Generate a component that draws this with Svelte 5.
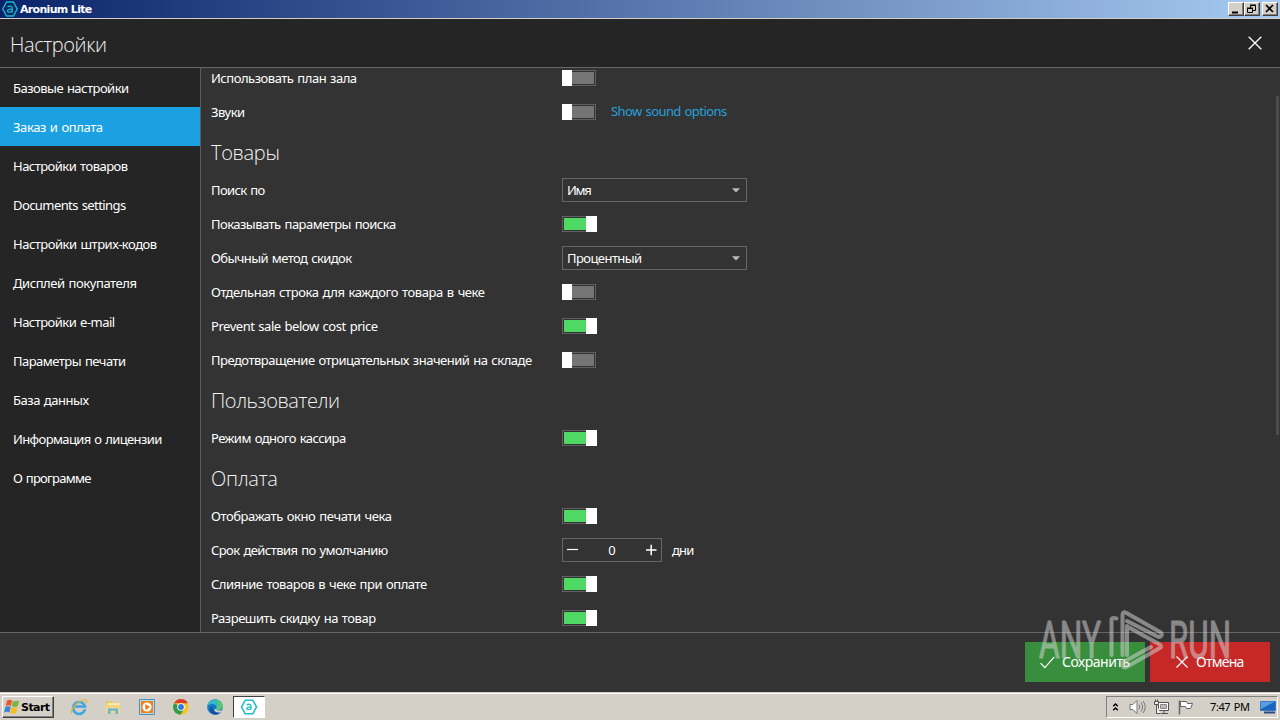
<script>
  const nav = [
    ['Базовые настройки', 116], ['Заказ и оплата', 90], ['Настройки товаров', 115],
    ['Documents settings', 113], ['Настройки штрих-кодов', 144], ['Дисплей покупателя', 124],
    ['Настройки e-mail', 102], ['Параметры печати', 113], ['База данных', 76],
    ['Информация о лицензии', 149], ['О программе', 78]
  ];
  const rows = [
    { label: 'Использовать план зала', w: 146, type: 'toggle', on: false },
    { label: 'Звуки', w: 34, type: 'toggle', on: false, link: 'Show sound options' },
    { heading: 'Товары', w: 69 },
    { label: 'Поиск по', w: 54, type: 'select', value: 'Имя', vw: 24 },
    { label: 'Показывать параметры поиска', w: 185, type: 'toggle', on: true },
    { label: 'Обычный метод скидок', w: 141, type: 'select', value: 'Процентный', vw: 75 },
    { label: 'Отдельная строка для каждого товара в чеке', w: 274, type: 'toggle', on: false },
    { label: 'Prevent sale below cost price', w: 167, type: 'toggle', on: true },
    { label: 'Предотвращение отрицательных значений на складе', w: 321, type: 'toggle', on: false },
    { heading: 'Пользователи', w: 129 },
    { label: 'Режим одного кассира', w: 135, type: 'toggle', on: true },
    { heading: 'Оплата', w: 67 },
    { label: 'Отображать окно печати чека', w: 181, type: 'toggle', on: true },
    { label: 'Срок действия по умолчанию', w: 177, type: 'number', value: 0 },
    { label: 'Слияние товаров в чеке при оплате', w: 216, type: 'toggle', on: true },
    { label: 'Разрешить скидку на товар', w: 165, type: 'toggle', on: true }
  ];

  // Spreads the letters so that a label takes the given width.
  function fit(node, width) {
    const natural = node.getBoundingClientRect().width;
    const spacing = (width - 0.4 - natural) / node.textContent.length;
    node.style.letterSpacing = `${spacing}px`;
  }
</script>

<div class="screen">
  <div class="titlebar">
    <svg class="logo" width="16" height="16" viewBox="0 0 16 16">
      <path d="M4.600 1h6.800L15.200 8l-3.800 7H4.600L.8 8z" fill="#0b2a5c" stroke="#19b5d8" stroke-width="1.400" />
      <path d="M5.700 6.200c.8-1.500 4.500-1.500 4.500.8v4.500M10.200 8.100c-1.600-.1-4.700 0-4.700 1.700 0 2 3.900 1.800 4.700-.3" fill="none" stroke="#19b5d8" stroke-width="1.300" />
    </svg>
    <b use:fit={72}>Aronium Lite</b>
    <div class="winbtns">
      <i><svg width="14" height="12"><path d="M3 9.500h6" stroke="#000" stroke-width="2" /></svg></i>
      <i><svg width="14" height="12" fill="none" stroke="#000"><path d="M5.500 5V2.500h5v5H8M5 2h6" /><path d="M2.500 5.500h5v4h-5zM2 5h6" /></svg></i>
      <i class="gap"><svg width="14" height="12"><path d="M3 2l7 7M10 2L3 9" stroke="#000" stroke-width="1.700" /></svg></i>
    </div>
  </div>

  <header>
    <h1 use:fit={97}>Настройки</h1>
    <svg width="14" height="14" viewBox="0 0 14 14"><path d="M.7.7l12.600 12.600M13.300.7L.7 13.300" stroke="#fff" stroke-width="1.300" /></svg>
  </header>

  <div class="body">
    <nav>
      {#each nav as [label, w], i}
        <div class="item" class:active={i === 1}><span use:fit={w}>{label}</span></div>
      {/each}
    </nav>
    <main>
      <div class="list">
        {#each rows as row}
          {#if row.heading}
            <h2><span use:fit={row.w}>{row.heading}</span></h2>
          {:else}
            <div class="row">
              <div class="label"><span use:fit={row.w}>{row.label}</span></div>
              {#if row.type === 'toggle'}
                <div class="toggle" class:on={row.on}><div class="fill"></div><div class="knob"></div></div>
                {#if row.link}<span class="link"><span use:fit={116}>{row.link}</span></span>{/if}
              {:else if row.type === 'select'}
                <div class="select"><span use:fit={row.vw}>{row.value}</span>
                  <svg width="8" height="5"><path d="M0 .3h8L4 4.600z" fill="#bbb" /></svg>
                </div>
              {:else}
                <div class="number">
                  <svg width="12" height="12"><path d="M0 5.500h11" stroke="#fff" stroke-width="1.200" /></svg>
                  <span>{row.value}</span>
                  <svg width="12" height="12"><path d="M1 6h10.500M6.200 .8v10.400" stroke="#fff" stroke-width="1.500" /></svg>
                </div>
                <span class="unit"><span use:fit={22}>дни</span></span>
              {/if}
            </div>
          {/if}
        {/each}
      </div>
      <div class="scroll"></div>
    </main>
  </div>

  <footer>
    <div class="btn save">
      <svg width="15" height="13" viewBox="0 0 15 13"><path d="M.6 7.200l4.200 4.500L14.300.8" fill="none" stroke="#fff" stroke-width="1.200" /></svg>
      <span use:fit={68}>Сохранить</span>
    </div>
    <div class="btn cancel">
      <svg width="12" height="12" viewBox="0 0 12 12"><path d="M.5.5l11 11M11.500.5l-11 11" stroke="#fff" stroke-width="1.200" /></svg>
      <span use:fit={48}>Отмена</span>
    </div>
  </footer>

  <div class="taskbar">
    <div class="start">
      <svg width="16" height="16" viewBox="0 0 16 16">
        <path d="M3 1.500Q5.500 0 8 1.500L6.900 7Q4.500 5.700 1.700 7z" fill="#e8582c" />
        <path d="M8.700 1.800Q11.500 3 15.300 1.600L13.800 7.300Q10.500 8.600 7.700 7.300z" fill="#7cb342" />
        <path d="M1.500 7.800Q4.200 6.500 6.700 7.900L5.500 13.500Q3 12.200.1 13.500z" fill="#3b83d8" />
        <path d="M7.500 8.200Q10.300 9.500 13.600 8.200L12.200 14Q9 15.200 6.100 13.900z" fill="#f6bd22" />
      </svg>
      <b use:fit={29}>Start</b>
    </div>
    <div class="apps">
      <svg viewBox="0 0 18 18">
        <path d="M15 11.300A6 6 0 1 1 15 8.600H5" fill="none" stroke="#3fa5e2" stroke-width="2.500" />
        <path d="M2 15.800C-1 14 5 5.500 10.500 3S18 2 16 5.500" fill="none" stroke="#e9b72f" stroke-width="1.200" />
      </svg>
      <svg viewBox="0 0 18 18">
        <path d="M2 3h5l1 1.500h7V14H2z" fill="#e8c765" /><path d="M3.500 5h12v4h-12z" fill="#f8eaab" />
        <path d="M2 7h14v8H2z" fill="#f0d67e" /><path d="M4 16v-5.500h10V16h-2.500v-3.200h-5V16z" fill="#62b6dd" />
      </svg>
      <svg viewBox="0 0 18 18">
        <path d="M1.500 1.500h15v15h-15z" fill="#b9d8ee" stroke="#4c93c5" /><path d="M3 3h12v12H3z" fill="#ef8315" />
        <circle cx="9" cy="9" r="4.600" fill="#fff" /><path d="M7.400 6l4.600 3-4.600 3z" fill="#ed7410" />
      </svg>
      <svg viewBox="0 0 18 18">
        <circle cx="9" cy="9" r="7.800" fill="#f6c51f" />
        <path d="M2.200 5A7.800 7.800 0 0 0 8.500 16.800L12 11 9 9z" fill="#2d9d4a" />
        <path d="M2.200 5A7.800 7.800 0 0 1 15.800 5.200H9z" fill="#dc3b2e" />
        <circle cx="9" cy="9" r="3.800" fill="#fff" /><circle cx="9" cy="9" r="2.900" fill="#3478dd" />
      </svg>
      <svg viewBox="0 0 18 18">
        <circle cx="9" cy="9" r="7.800" fill="#1676c4" />
        <path d="M1.300 8C2.500-.8 15.500-.8 16.800 8c.2 3.800-5.300 4.700-6.800 2.900 1.500-2.500-.3-4.900-3.700-4.900C4 6 2.200 6.800 1.300 8z" fill="#36b8c8" />
        <path d="M10.500 1.400C14 2 16.500 5 16.800 8c.2 3.800-5.300 4.700-6.800 2.900C13 8 12 4 10.500 1.400z" fill="#5cc76a" />
        <path d="M6.500 8.500C5.500 13 10 16 14.900 14.200 12.500 17 8.500 17.200 6 15.500 2.800 13 4 9.500 6.500 8.500z" fill="#124f9d" />
        <path d="M10 10.900c1.200 2 4.500 2.200 6.300.8-.4 1-1 1.900-1.600 2.500-3 1-6.200-.2-6.400-2.900z" fill="#d4d0c8" />
      </svg>
    </div>
    <div class="task">
      <svg width="18" height="16" viewBox="0 0 18 16">
        <path d="M5.200 1.200h7.600L16.500 8l-3.700 6.800H5.200L1.500 8z" fill="none" stroke="#20bfc6" stroke-width="1.600" />
        <path d="M6.800 6.100c.8-1.200 4.200-1.300 4.200.8v3.900M11 8.100c-1.500-.1-4.300 0-4.300 1.400 0 1.700 3.500 1.500 4.300-.2" fill="none" stroke="#20bfc6" stroke-width="1.300" />
      </svg>
    </div>
    <div class="tray">
      <svg class="chev" width="8" height="10" fill="none" stroke="#000" stroke-width="1.400"><path d="M1.200 4.300L3.500 2l2.300 2.300M1.200 8.300l2.300-2.300 2.300 2.300" /></svg>
      <svg width="18" height="16" fill="none" stroke="#777">
        <path d="M1 5.500h3l4-4v13l-4-4H1z" fill="#fff" /><path d="M10 5.500q1.800 2.500 0 5M12 3.500q3.200 4.500 0 9M14 2q4.500 6 0 12" />
      </svg>
      <svg class="net" width="18" height="16" fill="none" stroke="#555">
        <path d="M5.500 3.500h10v8h-10z" fill="#fff" /><path d="M7.500 5.500h6v4h-6z" fill="#bbb" stroke="#888" /><path d="M8 14.500h7M11 12v2" />
        <path d="M1.500 2.500h4v3h-4zM2.500 .5v2M4.500 .5v2M3.500 5.500v9h4" fill="#eee" />
      </svg>
      <svg class="flag" width="17" height="16" stroke="#666"><path d="M2.500 1.500v14" stroke-width="1.500" /><path d="M3.500 2.500h6l1 2h5l-2 5h-4l-1-2h-5z" fill="#fff" /></svg>
      <span class="clock"><span use:fit={40}>7:47 PM</span></span>
      <svg class="desk" width="16" height="16"><path d="M.5 2.500h15v9H.5z" fill="#1c63bd" stroke="#3979c8" /><path d="M1 3h13L1 10z" fill="#5a9de5" /><path d="M4 13.500h11" stroke="#294c82" stroke-width="2" /></svg>
    </div>
  </div>

  <svg class="watermark" width="200" height="74" viewBox="0 0 200 74" fill="none" stroke-linejoin="round" stroke-linecap="round">
    <text x="1" y="54" textLength="62" lengthAdjust="spacingAndGlyphs">ANY</text>
    <path d="M73.500 51V16q0-3 5-1.500" />
    <path d="M84.500 51V11q0-4 4-2L122 28q3.500 2.500.5 4.500-2 1-4-.5L89 17" />
    <path d="M89 51V22M90 23l31 17q4 2.500 0 4.500L88.500 63q-4 1.500-4-3v-1.500L113 43" />
    <text x="131" y="54" textLength="62" lengthAdjust="spacingAndGlyphs">RUN</text>
  </svg>
</div>

<style>
  :global(body) { margin: 0; overflow: hidden; }
  .screen { position: relative; width: 1280px; height: 720px; display: flex; flex-direction: column; background: #333; color: #fff; font: 13px/16px "Noto Sans", "Open Sans", sans-serif; word-spacing: 1px; overflow: hidden; white-space: nowrap; }
  .screen * { box-sizing: border-box; }
  svg { display: block; flex: none; }
  span, b { display: inline-block; }
  .titlebar { height: 19px; flex: none; display: flex; align-items: center; padding: 0 2px; background: linear-gradient(90deg, #0a246a, #a6caf0); border-bottom: 1px solid #d4d0c8; }
  .logo { margin-right: 2px; }
  .titlebar b { font: bold 11px/16px "DejaVu Sans", sans-serif; padding-top: 1px; word-spacing: 0; }
  .winbtns { display: flex; margin-left: auto; }
  .winbtns i { width: 16px; height: 14px; background: #d4d0c8; border: 1px solid; border-color: #fff #404040 #404040 #fff; box-shadow: inset -1px -1px #808080; }
  .winbtns .gap { margin-left: 2px; }
  header { height: 49px; flex: none; display: flex; align-items: center; justify-content: space-between; padding: 0 18px 0 10px; background: #252525; border-bottom: 1px solid #666; }
  h1, h2 { margin: 0; font: 300 20px/28px "Open Sans", "Noto Sans", sans-serif; color: #f2f2f2; }
  h1 { padding-top: 3px; }
  .body { height: 564px; flex: none; display: flex; }
  nav { width: 201px; flex: none; background: #252525; border-right: 1px solid #5c5c5c; }
  .item { height: 39px; display: flex; align-items: center; padding-left: 13px; }
  .item.active { background: #1ba1e2; }
  main { flex: 1; display: flex; overflow: hidden; background: #333; }
  .list { flex: 1; margin-top: -7px; padding-left: 10px; }
  .row { height: 34px; display: flex; align-items: center; }
  .label { width: 351px; flex: none; }
  h2 { height: 44px; display: flex; align-items: center; padding-top: 3px; }
  .toggle { width: 34px; height: 16px; display: flex; border: 1px solid #606060; padding: 1px; }
  .fill { flex: 1; background: #757575; }
  .knob { order: -1; width: 10px; height: 16px; margin: -2px 0 -2px -2px; background: #fff; }
  .toggle.on { width: 35px; }
  .on .fill { background: #4fd964; }
  .on .knob { order: 1; width: 11px; margin: -2px -2px -2px 0; }
  .link { color: #26a0da; margin-left: 15px; padding-bottom: 2px; }
  .select { width: 185px; height: 24px; display: flex; align-items: center; justify-content: space-between; padding: 0 6px 0 4px; border: 1px solid #666; }
  .select svg { margin-top: 1px; }
  .number { width: 100px; height: 24px; display: flex; align-items: center; justify-content: space-between; padding: 0 4px 0 4px; border: 1px solid #666; }
  .unit { margin-left: 10px; }
  .scroll { width: 4px; height: 339px; margin-top: 28px; background: #4b4b4b; border-right: 1px solid #333; }
  footer { height: 60px; flex: none; display: flex; justify-content: flex-end; gap: 5px; padding: 9px 10px 0; border-top: 1px solid #666; background: #333; }
  .btn { width: 120px; height: 40px; display: flex; align-items: center; font-size: 14px; }
  .save { background: #388e3c; padding-left: 15px; gap: 7px; }
  .cancel { background: #c62828; padding-left: 26px; gap: 8px; }
  .taskbar { height: 28px; flex: none; display: flex; align-items: center; padding: 1px 2px 0; color: #000; background: #d4d0c8; border-top: 1px solid #d4d0c8; box-shadow: inset 0 1px #fff; }
  .start { width: 52px; height: 22px; display: flex; align-items: center; gap: 1px; padding-left: 1px; border: 1px solid; border-color: #fff #404040 #404040 #fff; box-shadow: inset -1px -1px #808080; }
  .start b { font: bold 11px/16px "DejaVu Sans", sans-serif; padding-top: 1px; }
  .apps { display: flex; gap: 16px; margin-left: 16px; }
  .apps svg { width: 18px; height: 18px; }
  .task { width: 32px; height: 22px; margin-left: 9px; display: flex; align-items: center; justify-content: center; background: #fff; border: 1px solid; border-color: #404040 #fff #fff #404040; }
  .tray { width: 172px; height: 22px; margin-left: auto; display: flex; align-items: center; padding-left: 5px; border: 1px solid; border-color: #808080 #fff #fff #808080; }
  .chev { margin-right: 9px; }
  .net { margin-left: 6px; }
  .flag { margin-left: 6px; }
  .clock { font-size: 11px; margin-left: 16px; }
  .desk { margin-left: 10px; }
  .watermark { position: absolute; left: 1038px; top: 604px; opacity: .52; stroke: #d7d7d7; stroke-width: 4px; }
  .watermark text { font: 52px Roboto, sans-serif; fill: #d7d7d7; stroke-width: 1.2px; word-spacing: 0; }
</style>
